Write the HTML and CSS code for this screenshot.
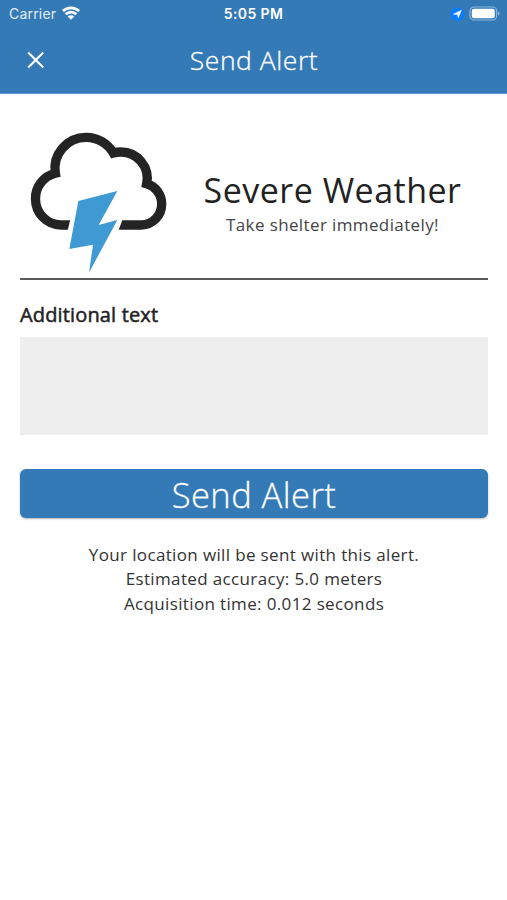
FILE: index.html
```
<!DOCTYPE html>
<html lang="en">
<head>
<meta charset="utf-8">
<title>Send Alert</title>
<link rel="stylesheet" href="styles.css">
</head>
<body>
<header class="top">
  <div class="status">
    <div class="network">
      <span class="carrier">Carrier</span>
      <svg class="wifi" viewBox="0 0 18 14" width="18" height="14">
        <g fill="none" stroke="#fff" stroke-width="2.7">
          <path d="M.9 5.1A11.8 11.8 0 0 1 17.1 5.1"/>
          <path d="M3.7 8.3A7.5 7.5 0 0 1 14.3 8.3"/>
        </g>
        <path d="M9 13.8L5.7 10.6A4.6 4.6 0 0 1 12.3 10.6Z" fill="#fff"/>
      </svg>
    </div>
    <span class="clock">5:05 PM</span>
    <div class="indicators">
      <svg viewBox="0 0 14 14" width="14" height="14">
        <circle cx="7.5" cy="7.3" r="6.8" fill="#087cff"/>
        <path d="M11.4 3.3L8.3 11L7.4 7.5L3.4 7.2Z" fill="#fff" stroke="#fff" stroke-width=".5"/>
      </svg>
      <svg viewBox="0 0 31 15" width="31" height="15">
        <rect x="1" y="1" width="26.6" height="13" rx="4" fill="none" stroke="#8bb5da" stroke-width="1.2"/>
        <rect x="2.8" y="2.8" width="23" height="9.4" rx="2.3" fill="#fff"/>
        <path d="M29 5.2Q30.6 6 30.6 7.5T29 9.8Z" fill="#8bb5da"/>
      </svg>
    </div>
  </div>
  <div class="navbar">
    <svg class="close" viewBox="0 0 18 18" width="18" height="18"><path d="M1.2 1.4L16.2 16.6M16.2 1.4L1.2 16.6" stroke="#fff" stroke-width="2.1"/></svg>
    <h1 class="title">Send Alert</h1>
  </div>
</header>
<main class="content">
  <section class="alert">
    <svg class="storm" viewBox="60 36 411 423" width="137" height="141">
      <path d="M190 315H153A77 78 0 0 1 76.500 237A78 78 0 0 1 136 160A93.400 93.400 0 0 1 228 52A93.400 93.400 0 0 1 310 99A79 79 0 0 1 332 96A79 79 0 0 1 410 191A63 63 0 0 1 455 253A62 62 0 0 1 394 315H315" fill="none" stroke="#242424" stroke-width="28"/>
      <path d="M181 298H338L325 332H173Z" fill="#fff"/>
      <path d="M205 243L322 213L266 315L322 300L237 458L249 374L178 387Z" fill="#3f9ad3"/>
    </svg>
    <div class="summary">
      <h2 class="name">Severe Weather</h2>
      <p class="advice">Take shelter immediately!</p>
    </div>
  </section>
  <label class="label" for="extra">Additional text</label>
  <textarea class="extra" id="extra"></textarea>
  <button class="send" type="button">Send Alert</button>
  <div class="location">
    <p>Your location will be sent with this alert.</p>
    <p>Estimated accuracy: 5.0 meters</p>
    <p>Acquisition time: 0.012 seconds</p>
  </div>
</main>
</body>
</html>
```
FILE: styles.css
```
* { box-sizing: border-box; }
body {
  margin: 0;
  min-height: 900px;
  background: #fff;
  color: #222;
  font-family: "Open Sans", sans-serif;
}
h1, h2, p { margin: 0; }
svg { display: block; flex: none; overflow: visible; }
.top {
  height: 94px;
  background: #337ab7;
  border-bottom: 1px solid #5e97c7;
  color: #fff;
}
.status {
  display: grid;
  grid-template-columns: 1fr auto 1fr;
  align-items: center;
  height: 27px;
  padding: 0 7px 0 9px;
  font: 14px/20px Inter, sans-serif;
}
.network, .indicators { display: flex; align-items: center; }
.network { gap: 6px; }
.wifi { margin-top: -1px; }
.indicators { justify-content: flex-end; gap: 5px; }
.carrier { letter-spacing: 0.2px; color: #e3edf6; }
.clock { margin-left: -2px; font-weight: 600; letter-spacing: 0.4px; }
.navbar {
  display: grid;
  grid-template-columns: 18px 1fr 18px;
  align-items: center;
  height: 66px;
  padding: 0 26px 0 27px;
}
.title {
  text-align: center;
  font-size: 26.5px;
  line-height: 36px;
  font-weight: 300;
  letter-spacing: 0.55px;
  -webkit-text-stroke: 0.3px #fff;
}
.content { padding: 0 19px 0 20px; }
.alert {
  display: flex;
  height: 186px;
  padding: 38px 0 0 10px;
  border-bottom: 2px solid #5a5a5a;
}
.summary { flex: 1; padding: 35px 0 0 10px; text-align: center; }
.name {
  font-size: 34px;
  line-height: 46px;
  font-weight: 400;
  letter-spacing: 0.5px;
}
.advice { font-size: 17px; line-height: 24px; letter-spacing: 0.38px; color: #444; }
.label {
  display: block;
  margin-top: 21px;
  font-size: 20px;
  line-height: 28px;
  font-weight: 400;
  letter-spacing: 0.15px;
  -webkit-text-stroke: 0.5px #222;
}
.extra {
  display: block;
  width: 100%;
  height: 98px;
  margin-top: 8px;
  border: 0;
  background: #eee;
  resize: none;
}
.send {
  display: block;
  width: 100%;
  height: 49px;
  margin-top: 34px;
  padding: 2px 0 0;
  border: 0;
  border-radius: 6px;
  background: #337ab7;
  box-shadow: 0 1px 2px rgba(0, 0, 0, 0.3);
  color: #fff;
  font: 300 34.5px/47px "Open Sans", sans-serif;
  letter-spacing: 0.45px;
  -webkit-text-stroke: 0.3px #fff;
}
.location {
  margin-top: 25px;
  text-align: center;
  font-size: 17px;
  line-height: 24.4px;
  letter-spacing: 0.36px;
  color: #333;
}
```
